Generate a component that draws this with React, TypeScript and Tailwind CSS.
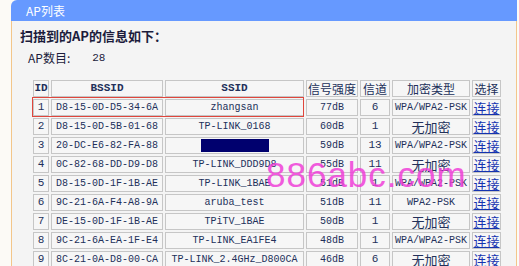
import React from 'react'

const rows = [
  { id: '1', bssid: 'D8-15-0D-D5-34-6A', ssid: 'zhangsan', signal: '77dB', ch: '6', enc: 'WPA/WPA2-PSK' },
  { id: '2', bssid: 'D8-15-0D-5B-01-68', ssid: 'TP-LINK_0168', signal: '60dB', ch: '1', enc: '无加密' },
  { id: '3', bssid: '20-DC-E6-82-FA-88', ssid: '', signal: '59dB', ch: '13', enc: 'WPA/WPA2-PSK' },
  { id: '4', bssid: '0C-82-68-DD-D9-D8', ssid: 'TP-LINK_DDD9D8', signal: '55dB', ch: '11', enc: '无加密' },
  { id: '5', bssid: 'D8-15-0D-1F-1B-AE', ssid: 'TP-LINK_1BAE', signal: '51dB', ch: '1', enc: 'WPA/WPA2-PSK' },
  { id: '6', bssid: '9C-21-6A-F4-A8-9A', ssid: 'aruba_test', signal: '51dB', ch: '11', enc: 'WPA2-PSK' },
  { id: '7', bssid: 'DE-15-0D-1F-1B-AE', ssid: 'TPiTV_1BAE', signal: '50dB', ch: '1', enc: '无加密' },
  { id: '8', bssid: '9C-21-6A-EA-1F-E4', ssid: 'TP-LINK_EA1FE4', signal: '48dB', ch: '1', enc: 'WPA/WPA2-PSK' },
  { id: '9', bssid: '8C-21-0A-D8-00-CA', ssid: 'TP-LINK_2.4GHz_D800CA', signal: '46dB', ch: '6', enc: '无加密' },
  { id: '10', bssid: '', ssid: '', signal: '', ch: '', enc: '' },
]

const mono = "font-['Liberation_Mono','Noto_Sans_CJK_SC',monospace]"
const cjk = "font-['Noto_Sans_CJK_SC',sans-serif]"
const cell =
  'border border-[#c6c6c6] bg-[#f6f6f6] h-[17px] p-0 text-center whitespace-nowrap overflow-hidden leading-[15px]'

export default function App() {
  return (
    <div className={`w-[519px] h-[266px] overflow-hidden bg-[#fcfaf6] pl-[11px] pr-[2px] ${cjk}`}>
      {/* title bar */}
      <div className="h-[21px] bg-[#6699ff] rounded-tl-[6px] pl-[15px] flex items-center text-[12px] text-white">
        AP列表
      </div>

      {/* panel body */}
      <div className="relative h-[245px] bg-[#f4f4f4] border-l border-r border-[#f3c68a]">
        <div className="pt-[6px] pl-[8px] text-[13px] font-bold text-[#1c1c3c] leading-[18px]">
          扫描到的AP的信息如下：
        </div>
        <div className="mt-[4px] pl-[16px] text-[12px] text-[#1c1c3c] leading-[18px] flex">
          <span>AP数目:</span>
          <span className={`ml-[22px] text-[11px] ${mono}`}>28</span>
        </div>

        <div className="mt-[11px] ml-[19px] w-[468px]">
          <table className={`w-[468px] table-fixed border-separate border-spacing-[2px] text-[10px] text-[#22305a] ${mono}`}>
            <colgroup>
              <col className="w-[16px]" />
              <col className="w-[112px]" />
              <col className="w-[139px]" />
              <col className="w-[52px]" />
              <col className="w-[30px]" />
              <col className="w-[78px]" />
              <col className="w-[29px]" />
            </colgroup>
            <thead>
              <tr className="text-[12px]">
                <th className={`${cell} !h-[16px] font-bold text-[11px] ${mono}`}>ID</th>
                <th className={`${cell} !h-[16px] font-bold text-[11px] ${mono}`}>BSSID</th>
                <th className={`${cell} !h-[16px] font-bold text-[11px] ${mono}`}>SSID</th>
                <th className={`${cell} !h-[16px] font-normal ${cjk}`}>信号强度</th>
                <th className={`${cell} !h-[16px] font-normal ${cjk}`}>信道</th>
                <th className={`${cell} !h-[16px] font-normal ${cjk}`}>加密类型</th>
                <th className={`${cell} !h-[16px] font-normal ${cjk}`}>选择</th>
              </tr>
            </thead>
            <tbody>
              {rows.map((r) => (
                <tr key={r.id}>
                  <td className={`${cell} text-[11px]`}>{r.id}</td>
                  <td className={cell}>{r.bssid}</td>
                  <td className={cell}>
                    {r.id === '3' ? (
                      <span className="inline-block align-middle w-[68px] h-[13px] bg-[#00006e]" />
                    ) : (
                      r.ssid
                    )}
                  </td>
                  <td className={cell}>{r.signal}</td>
                  <td className={`${cell} text-[11px]`}>{r.ch}</td>
                  <td className={`${cell} ${r.enc === '无加密' ? `text-[13px] ${cjk}` : ''}`}>{r.enc}</td>
                  <td className={`${cell} text-[13px] ${cjk}`}>
                    {r.bssid && (
                      <span
                        className={`text-[#1533b0] underline ${
                          r.id === '1' ? 'outline outline-1 outline-[#e0463c]' : ''
                        }`}
                      >
                        连接
                      </span>
                    )}
                  </td>
                </tr>
              ))}
            </tbody>
          </table>
        </div>

        {/* highlight on first row */}
        <div className="absolute left-[20px] top-[76px] w-[272px] h-[20px] border border-[#e0463c] pointer-events-none" />

        {/* watermark */}
        <div className="absolute left-[254px] top-[136px] text-[35px] tracking-[1px] leading-none text-[#f040d8] opacity-85 font-['Liberation_Sans',sans-serif] pointer-events-none">
          886abc.com
        </div>
      </div>
    </div>
  )
}
